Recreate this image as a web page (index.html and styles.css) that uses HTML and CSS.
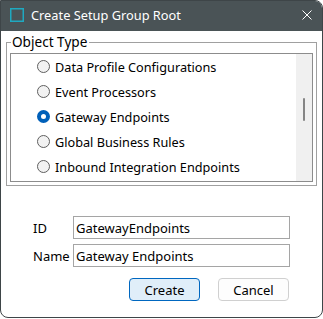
FILE: index.html
```html
<!DOCTYPE html>
<html lang="en">
<head>
    <meta charset="UTF-8">
    <title>Create Setup Group Root</title>
    <link rel="stylesheet" href="styles.css">
</head>
<body>
    <div class="window">
        <div class="titlebar">
            <svg class="app-icon" width="14" height="14" viewBox="0 0 14 14">
                <rect x="0.75" y="0.75" width="12.5" height="12.5" fill="none" stroke="#1fa9c0" stroke-width="1.5"/>
            </svg>
            <span class="title">Create Setup Group Root</span>
            <svg class="close" width="10" height="10" viewBox="0 0 10 10">
                <path d="M0.5 0.5 L9.5 9.5 M9.5 0.5 L0.5 9.5" stroke="#fff" stroke-width="1"/>
            </svg>
        </div>

        <div class="content">
            <fieldset class="group">
                <legend>Object Type</legend>
                <div class="listbox">
                    <div class="items">
                        <div class="item"><span class="radio"></span>Data Profile Configurations</div>
                        <div class="item"><span class="radio"></span>Event Processors</div>
                        <div class="item"><span class="radio checked"></span>Gateway Endpoints</div>
                        <div class="item"><span class="radio"></span>Global Business Rules</div>
                        <div class="item"><span class="radio"></span>Inbound Integration Endpoints</div>
                    </div>
                    <div class="scrollbar"><div class="thumb"></div></div>
                </div>
            </fieldset>

            <div class="form">
                <label class="label">ID</label>
                <div class="input">GatewayEndpoints</div>
                <label class="label">Name</label>
                <div class="input">Gateway Endpoints</div>
            </div>

            <div class="buttons">
                <button class="btn primary">Create</button>
                <button class="btn">Cancel</button>
            </div>
        </div>
    </div>
</body>
</html>
```

FILE: styles.css
```css
* {
    box-sizing: border-box;
}

body {
    margin: 0;
    background: #fff;
    font-family: "Noto Sans", "Open Sans", sans-serif;
    font-size: 13px;
    color: #000;
}

.window {
    width: 323px;
    height: 318px;
    border: 1px solid #3e4548;
    border-radius: 0 8px 8px 8px;
    overflow: hidden;
    background: #fff;
}

.titlebar {
    height: 30px;
    background: #4a5356;
    display: flex;
    align-items: center;
    padding: 0 10px 2px 9px;
    color: #fff;
}

.app-icon {
    flex: none;
}

.title {
    margin-left: 7px;
    font-size: 12.8px;
}

.close {
    margin-left: auto;
}

.group {
    margin: 2px 5px 0 5px;
    width: 311px;
    border: 1px solid #a0a0a0;
    padding: 0 3px 3px 3px;
}

.group legend {
    font-size: 13.6px;
    line-height: 18px;
    padding: 0 2px 0 1px;
    margin-left: 1px;
}

.listbox {
    margin-top: 2px;
    height: 129px;
    border: 1px solid #8c8c8c;
    display: flex;
}

.items {
    flex: 1;
    font-size: 12.7px;
}

.item {
    height: 25px;
    display: flex;
    align-items: center;
    padding-left: 26px;
}

.radio {
    width: 13px;
    height: 13px;
    border-radius: 50%;
    border: 1px solid #5f5f5f;
    background: #f2f2f2;
    margin-right: 5px;
    flex: none;
}

.radio.checked {
    border: 4px solid #0060b9;
    background: #fff;
}

.scrollbar {
    width: 16px;
    background: #f0f0f0;
    padding: 44px 0 0 7px;
}

.thumb {
    width: 2px;
    height: 23px;
    background: #858585;
    border-radius: 1px;
}

.form {
    display: grid;
    grid-template-columns: 40px 217px;
    row-gap: 5px;
    margin: 30px 0 0 32px;
}

.label {
    display: flex;
    align-items: center;
}

.input {
    height: 23px;
    border: 1px solid #a5a5a5;
    padding-left: 2px;
    display: flex;
    align-items: center;
}

.buttons {
    display: flex;
    gap: 18px;
    margin: 11px 0 0 128px;
}

.btn {
    width: 71px;
    height: 23px;
    font: inherit;
    color: #000;
    background: #fdfdfd;
    border: 1px solid #d0d0d0;
    border-radius: 4px;
    padding: 0;
}

.btn.primary {
    background: #e0eef9;
    border-color: #0067c0;
}
```
